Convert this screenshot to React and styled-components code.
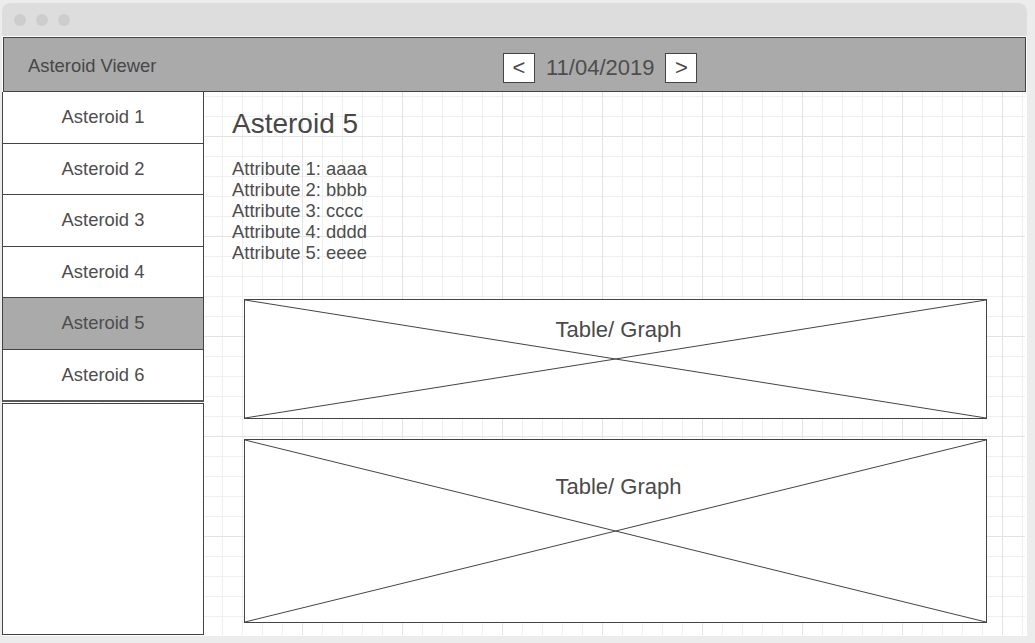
import styled, { createGlobalStyle } from 'styled-components';

const GlobalStyle = createGlobalStyle`
  html, body {
    margin: 0;
    padding: 0;
    background: #ececec;
  }
  body {
    font-family: 'Liberation Sans', Arial, sans-serif;
    color: #4a4a4a;
  }
`;

const asteroids = [1, 2, 3, 4, 5, 6].map((n) => ({ id: n, name: `Asteroid ${n}` }));
const attributes = [
  ['Attribute 1', 'aaaa'],
  ['Attribute 2', 'bbbb'],
  ['Attribute 3', 'cccc'],
  ['Attribute 4', 'dddd'],
  ['Attribute 5', 'eeee'],
];

const CrossBox = ({ height, textTop }) => (
  <Placeholder $height={height} $textTop={textTop}>
    <Cross viewBox="0 0 100 100" preserveAspectRatio="none">
      <line x1="0" y1="0" x2="100" y2="100" vectorEffect="non-scaling-stroke" />
      <line x1="0" y1="100" x2="100" y2="0" vectorEffect="non-scaling-stroke" />
    </Cross>
    <PlaceholderLabel>Table/ Graph</PlaceholderLabel>
  </Placeholder>
);

const App = () => {
  const selected = 5;

  return (
    <>
      <GlobalStyle />
      <Window>
        <TitleBar>
          <Dot />
          <Dot />
          <Dot />
        </TitleBar>
        <Header>
          <AppTitle>Asteroid Viewer</AppTitle>
          <DateNav>
            <NavButton>&lt;</NavButton>
            <DateText>11/04/2019</DateText>
            <NavButton>&gt;</NavButton>
          </DateNav>
        </Header>
        <Body>
          <Sidebar>
            <AsteroidList>
              {asteroids.map((a) => (
                <AsteroidItem key={a.id} $active={a.id === selected}>
                  {a.name}
                </AsteroidItem>
              ))}
            </AsteroidList>
            <EmptyPanel />
          </Sidebar>
          <Main>
            <Heading>Asteroid 5</Heading>
            <AttrList>
              {attributes.map(([k, v]) => (
                <li key={k}>
                  {k}: {v}
                </li>
              ))}
            </AttrList>
            <Boxes>
              <CrossBox height={120} textTop={17} />
              <CrossBox height={184} textTop={34} />
            </Boxes>
          </Main>
        </Body>
      </Window>
    </>
  );
};

export default App;

const Window = styled.div`
  margin: 3px 0 0 2px;
  width: 1025px;
  height: 633px;
  border-radius: 8px 8px 0 0;
  overflow: hidden;
  display: flex;
  flex-direction: column;
  background-color: #fff;
`;

const TitleBar = styled.div`
  height: 33px;
  flex: 0 0 33px;
  background: #dddddd;
  border-bottom: 1px solid #ffffff;
  display: flex;
  align-items: center;
  gap: 10px;
  padding: 0 0 0 12px;
`;

const Dot = styled.span`
  width: 12px;
  height: 12px;
  border-radius: 50%;
  background: #cdcdcd;
`;

const Header = styled.header`
  flex: 0 0 auto;
  height: 53px;
  margin: 0 1px;
  background: #aaaaaa;
  border: 1px solid #444;
  display: flex;
  align-items: center;
  padding-left: 24px;
`;

const AppTitle = styled.div`
  flex: 0 0 475px;
  margin-top: 2px;
  font-size: 18.4px;
  color: #474747;
`;

const DateNav = styled.div`
  display: flex;
  align-items: center;
  gap: 11px;
  margin-top: 6px;
`;

const NavButton = styled.div`
  box-sizing: border-box;
  width: 32px;
  height: 30px;
  background: #fff;
  border: 1px solid #444;
  display: flex;
  align-items: center;
  justify-content: center;
  font-size: 22px;
  color: #4a4a4a;
`;

const DateText = styled.span`
  font-size: 22px;
  color: #4d4d4d;
`;

const Body = styled.div`
  flex: 1;
  display: flex;
  min-height: 0;
  background-color: #fff;
  background-image: linear-gradient(to right, #e3e3e3 1px, transparent 1px),
    linear-gradient(to bottom, #e3e3e3 1px, transparent 1px),
    linear-gradient(to right, #efefef 1px, transparent 1px),
    linear-gradient(to bottom, #efefef 1px, transparent 1px);
  background-size: 100px 100px, 100px 100px, 20px 20px, 20px 20px;
  background-position: 0 44px, 0 44px, 0 4px, 0 4px;
  margin-right: 2px;
  margin-bottom: 1px;
`;

const Sidebar = styled.aside`
  flex: 0 0 202px;
  display: flex;
  flex-direction: column;
`;

const AsteroidList = styled.ul`
  list-style: none;
  margin: 0;
  padding: 0;
  height: 308px;
  display: flex;
  flex-direction: column;
  border-left: 1px solid #444;
  border-right: 1px solid #444;
  border-bottom: 2px solid #5a5a5a;
  background: #fff;
`;

const AsteroidItem = styled.li`
  flex: 1;
  display: flex;
  align-items: center;
  justify-content: center;
  font-size: 18.4px;
  color: #4d4d4d;
  background: ${(p) => (p.$active ? '#aaaaaa' : '#ffffff')};
  border-bottom: 1px solid #444;
  &:last-child {
    border-bottom: none;
  }
`;

const EmptyPanel = styled.div`
  flex: 1;
  margin-top: 1px;
  background: #fff;
  border: 1px solid #444;
`;

const Main = styled.main`
  flex: 1;
  padding: 16px 0 0 28px;
  display: flex;
  flex-direction: column;
`;

const Heading = styled.h1`
  margin: 0 0 18px;
  font-size: 28px;
  line-height: 32px;
  font-weight: normal;
  color: #474747;
`;

const AttrList = styled.ul`
  list-style: none;
  margin: 0;
  padding: 0;
  font-size: 18.4px;
  line-height: 21px;
  color: #4d4d4d;
`;

const Boxes = styled.div`
  margin: 36px 0 0 12px;
  width: 743px;
  display: flex;
  flex-direction: column;
  gap: 20px;
`;

const Placeholder = styled.div`
  position: relative;
  box-sizing: border-box;
  height: ${(p) => p.$height}px;
  background: #fff;
  border: 1px solid #444;
  padding: ${(p) => p.$textTop}px 0 0 6px;
  text-align: center;
`;

const Cross = styled.svg`
  position: absolute;
  inset: 0;
  width: 100%;
  height: 100%;
  stroke: #444;
  stroke-width: 1;
`;

const PlaceholderLabel = styled.span`
  position: relative;
  font-size: 22px;
  color: #4a4a4a;
`;
